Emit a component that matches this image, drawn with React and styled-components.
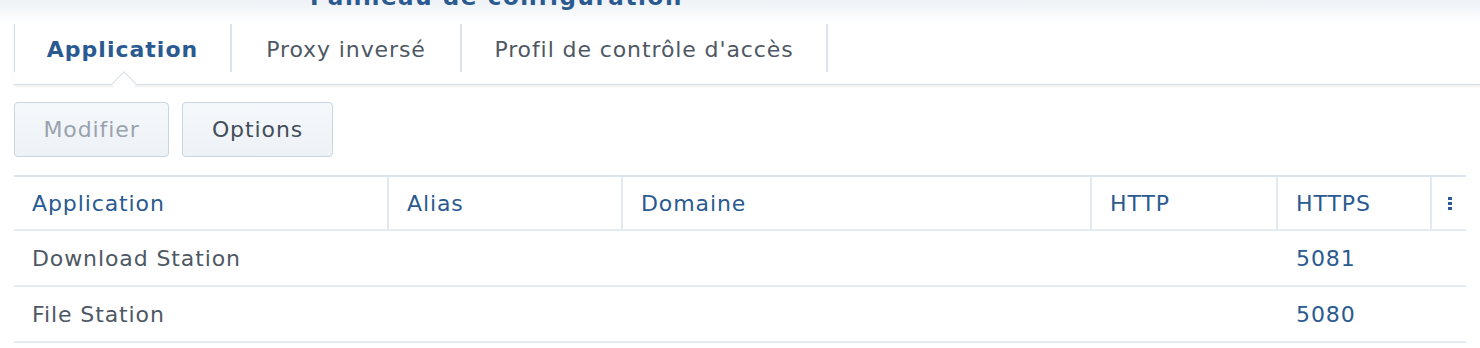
import * as React from "react";
import styled, { createGlobalStyle } from "styled-components";

const Global = createGlobalStyle`
  html, body {
    margin: 0;
    background: #fff;
    font-family: "DejaVu Sans", Verdana, sans-serif;
  }
`;

const Page = styled.div`
  width: 1480px;
  height: 348px;
  overflow: hidden;
  background: linear-gradient(#eef2f6 0px, #ffffff 26px);
`;

const TitleBar = styled.div`
  height: 24px;
  position: relative;
  overflow: hidden;
`;

const WindowTitle = styled.div`
  position: absolute;
  left: 310px;
  top: -14px;
  line-height: 22px;
  font-size: 23px;
  font-weight: bold;
  letter-spacing: 1.6px;
  color: #2a5a8f;
  white-space: nowrap;
`;

const Body = styled.div`
  padding: 0 14px;
`;

const TabBar = styled.div`
  display: flex;
  height: 60px;
  border-bottom: 1px solid #d8dee5;
  box-shadow: 0 2px 2px rgba(0, 0, 0, 0.06);
  margin-right: -14px;
`;

const Tab = styled.div`
  position: relative;
  display: flex;
  align-items: center;
  justify-content: center;
  width: ${(p) => p.$w}px;
  height: 48px;
  padding-top: 2px;
  border-left: ${(p) => (p.$first ? "1px solid #d3dde8" : "none")};
  border-right: 2px solid #dbe3ec;
  box-sizing: border-box;
  font-size: 22px;
  letter-spacing: ${(p) => (p.$active ? "1px" : "0.9px")};
  font-weight: ${(p) => (p.$active ? "bold" : "normal")};
  color: ${(p) => (p.$active ? "#2a5a8f" : "#4e5864")};
`;

const Caret = styled.div`
  position: absolute;
  left: 100px;
  bottom: -21px;
  width: 17px;
  height: 17px;
  background: #fff;
  border-left: 1px solid #d8dee5;
  border-top: 1px solid #d8dee5;
  transform: rotate(45deg);
  z-index: 2;
`;

const Toolbar = styled.div`
  display: flex;
  gap: 13px;
  padding-top: 17px;
  height: 55px;
`;

const Button = styled.div`
  display: flex;
  align-items: center;
  justify-content: center;
  width: ${(p) => p.$w}px;
  height: 55px;
  box-sizing: border-box;
  border: 1px solid #c9d5e1;
  border-radius: 4px;
  background: linear-gradient(#f5f8fb, #edf2f7);
  font-size: 22px;
  letter-spacing: 0.9px;
  color: ${(p) => (p.$disabled ? "#9aa3ad" : "#434e5a")};
`;

const Table = styled.div`
  margin-top: 18px;
  width: 1452px;
  border-top: 2px solid #dce5ee;
`;

const Row = styled.div`
  display: grid;
  grid-template-columns: 375px 234px 469px 186px 154px 34px;
  height: ${(p) => (p.$head ? 54 : 56)}px;
  border-bottom: 2px solid #e6ecf2;
  box-sizing: border-box;
`;

const HeadCell = styled.div`
  display: flex;
  align-items: center;
  padding-left: 18px;
  font-size: 22px;
  letter-spacing: 0.9px;
  color: #2a5a8f;
  border-right: ${(p) => (p.$last ? "none" : "2px solid #e2e9f0")};
`;

const Cell = styled.div`
  display: flex;
  align-items: center;
  padding-left: 18px;
  font-size: 22px;
  letter-spacing: 0.9px;
  color: ${(p) => (p.$blue ? "#2a5a8f" : "#4e5864")};
`;

const Kebab = styled.div`
  display: flex;
  flex-direction: column;
  gap: 2px;
  margin-left: -2px;
  span {
    width: 4px;
    height: 3px;
    background: #2a5a8f;
  }
`;

const cols = ["Application", "Alias", "Domaine", "HTTP", "HTTPS"];
const rows = [
  ["Download Station", "", "", "", "5081"],
  ["File Station", "", "", "", "5080"],
];

export default function App() {
  return (
    <Page>
      <Global />
      <TitleBar>
        <WindowTitle>Panneau de configuration</WindowTitle>
      </TitleBar>
      <Body>
        <TabBar>
          <Tab $w={218} $first $active>
            Application
            <Caret />
          </Tab>
          <Tab $w={230}>Proxy inversé</Tab>
          <Tab $w={366}>Profil de contrôle d'accès</Tab>
        </TabBar>
        <Toolbar>
          <Button $w={155} $disabled>Modifier</Button>
          <Button $w={151}>Options</Button>
        </Toolbar>
        <Table>
          <Row $head>
            {cols.map((c) => (
              <HeadCell key={c}>{c}</HeadCell>
            ))}
            <HeadCell $last>
              <Kebab>
                <span />
                <span />
                <span />
              </Kebab>
            </HeadCell>
          </Row>
          {rows.map((r) => (
            <Row key={r[0]}>
              {r.map((v, i) => (
                <Cell key={i} $blue={i === 4}>
                  {v}
                </Cell>
              ))}
              <Cell />
            </Row>
          ))}
        </Table>
      </Body>
    </Page>
  );
}
